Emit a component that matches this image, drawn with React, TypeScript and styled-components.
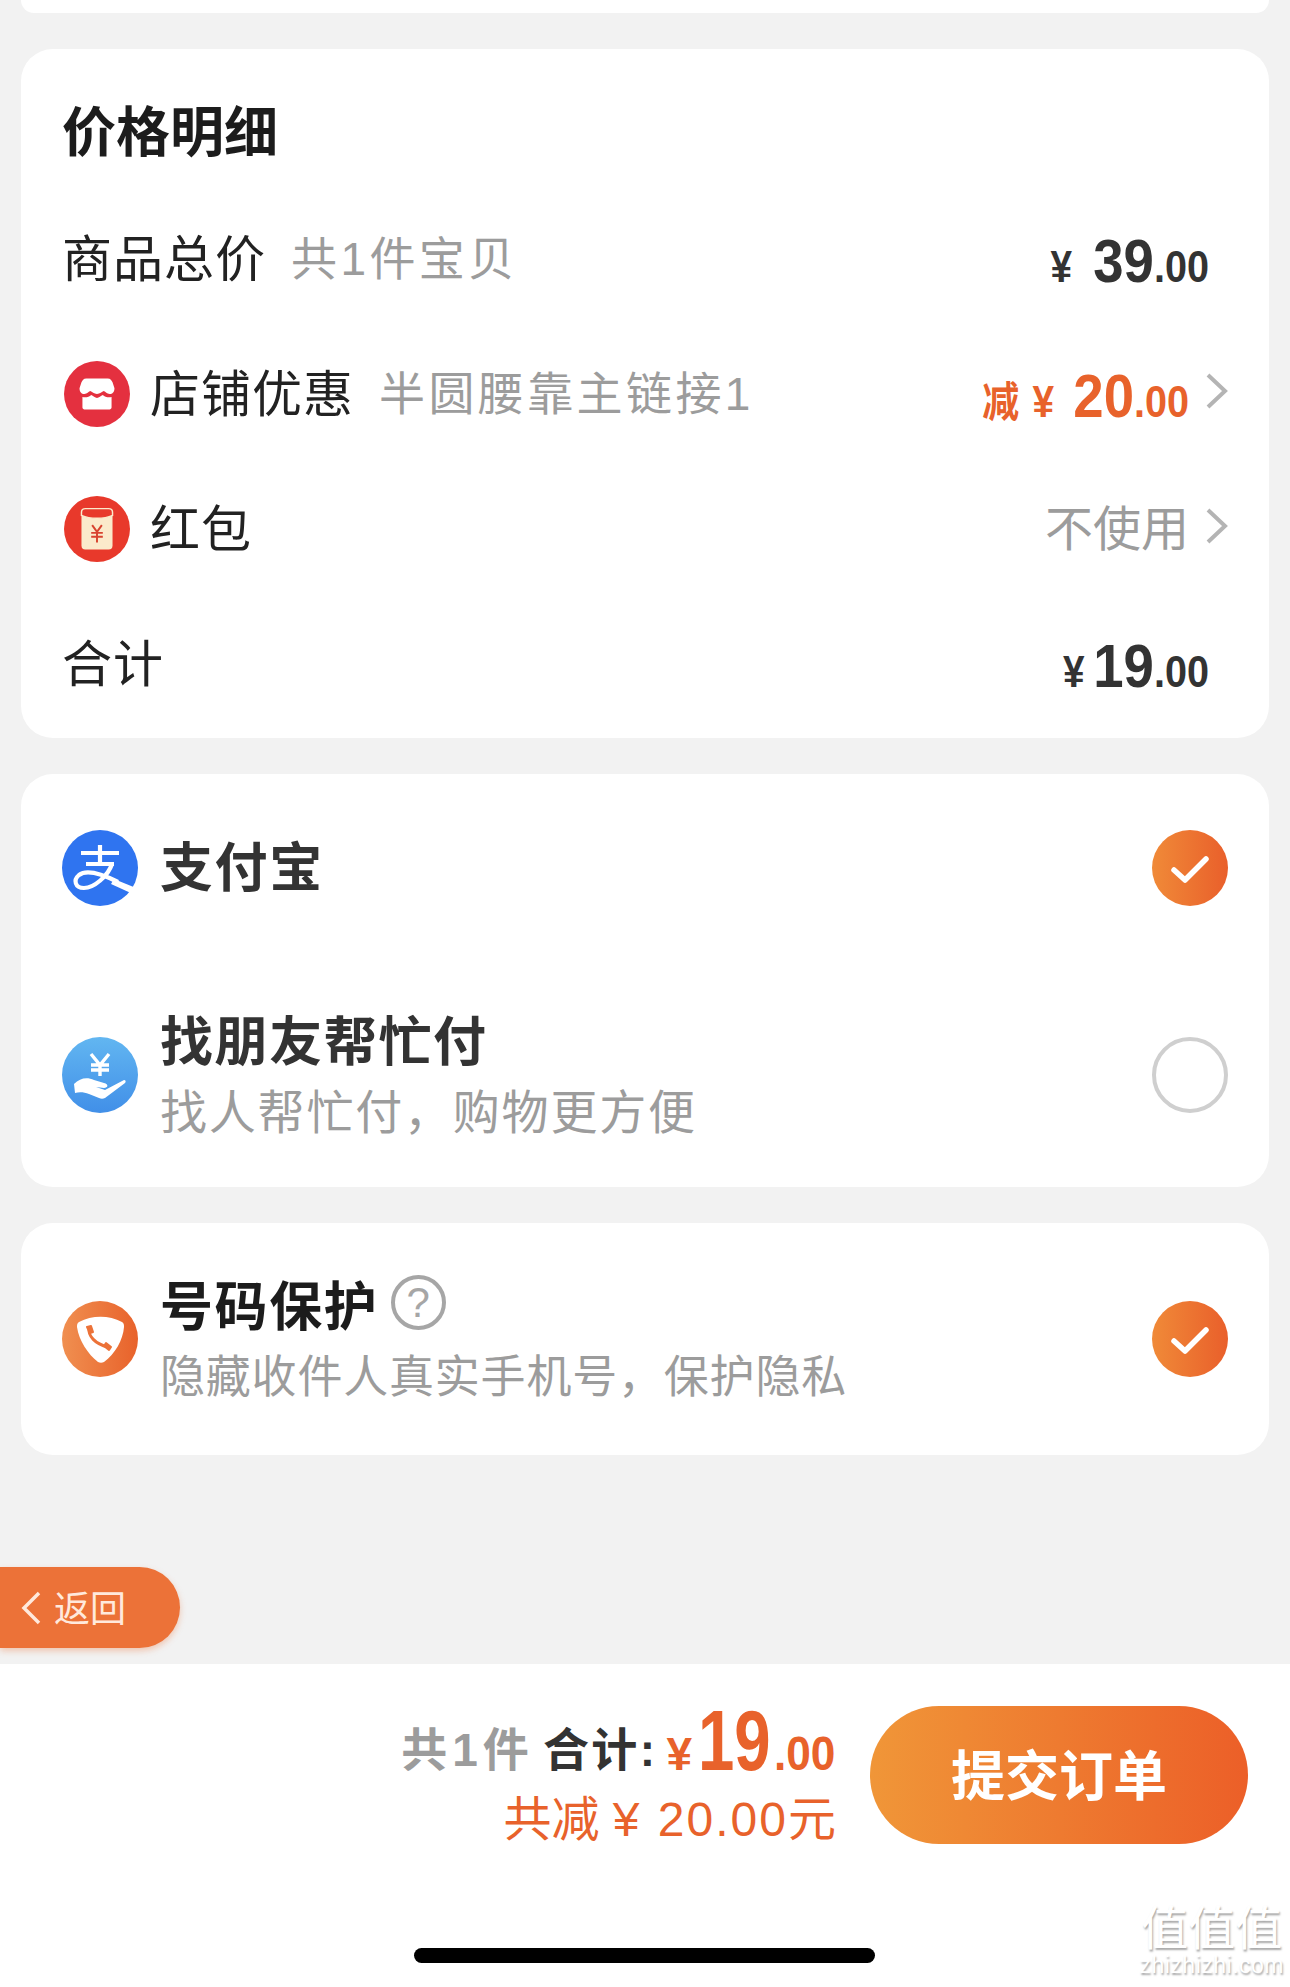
import React from "react";
import styled, { createGlobalStyle } from "styled-components";

const GlobalStyle = createGlobalStyle`
  html, body {
    margin: 0;
    padding: 0;
    background: #f2f2f2;
  }
  * {
    box-sizing: border-box;
  }
`;

const CJK = `"Liberation Sans", "Noto Sans CJK SC", sans-serif`;
const ORANGE = "#e8622b";
const GREY = "#9c9c9c";

const Page = styled.div`
  position: relative;
  width: 1290px;
  height: 1987px;
  overflow: hidden;
  display: flex;
  flex-direction: column;
  background: #f2f2f2;
  font-family: ${CJK};
`;

const Content = styled.main`
  display: flex;
  flex-direction: column;
  gap: 36px;
  padding: 0 21px;
`;

const PrevCard = styled.div`
  height: 13px;
  background: #fff;
  border-radius: 0 0 30px 30px;
`;

const Card = styled.section`
  background: #fff;
  border-radius: 32px;
`;

const PriceCard = styled(Card)`
  height: 689px;
  padding: 50px 41px 8px 41px;
`;

const Title = styled.h2`
  margin: 0 0 24px;
  height: 68px;
  font-size: 54px;
  line-height: 68px;
  font-weight: 700;
  color: #1c1c1c;
`;

const PriceRow = styled.div`
  height: 135px;
  display: flex;
  align-items: center;
`;

const RowIcon = styled.svg`
  width: 66px;
  height: 66px;
  flex: none;
  margin: 0 20px 0 2px;
`;

const Label = styled.span`
  padding-bottom: 8px;
  font-size: 50px;
  letter-spacing: 1px;
  color: #222;
`;

const Hint = styled.span`
  margin-left: 25px;
  padding-bottom: 8px;
  font-size: 46px;
  letter-spacing: 3.4px;
  color: ${GREY};
`;

const RowEnd = styled.div<{ $inset?: number }>`
  margin-left: auto;
  padding-right: ${(p) => p.$inset ?? 0}px;
  display: flex;
  align-items: center;
`;

const Money = styled.span<{ $accent?: boolean }>`
  display: flex;
  align-items: baseline;
  padding-top: 3px;
  font-weight: 700;
  color: ${(p) => (p.$accent ? ORANGE : "#333")};
  transform: scaleX(0.88);
  transform-origin: right center;
`;

const Yen = styled.span<{ $gap?: number }>`
  font-size: 44px;
  margin-right: ${(p) => p.$gap ?? 24}px;
`;

const Minus = styled.span`
  font-size: 42px;
  margin-right: 15px;
`;

const Whole = styled.span`
  font-size: 62px;
`;

const Cents = styled.span`
  font-size: 45px;
`;

const Muted = styled.span`
  padding-bottom: 8px;
  font-size: 48px;
  color: ${GREY};
`;

const Chevron = styled.svg`
  width: 23px;
  height: 38px;
  margin-left: 16px;
  margin-top: -6px;
`;

const PayCard = styled(Card)`
  height: 413px;
  display: flex;
  flex-direction: column;
`;

const OptionRow = styled.div<{ $h: number }>`
  height: ${(p) => p.$h}px;
  padding: 0 41px;
  display: flex;
  align-items: center;
`;

const OptionIcon = styled.svg`
  width: 76px;
  height: 76px;
  flex: none;
  margin-right: 22px;
`;

const OptionText = styled.div`
  display: flex;
  flex-direction: column;
  gap: 5px;
`;

const OptionTitle = styled.div<{ $tone?: string }>`
  display: flex;
  align-items: center;
  height: 64px;
  padding-bottom: 8px;
  font-size: 53px;
  letter-spacing: 1.6px;
  font-weight: 700;
  color: ${(p) => p.$tone ?? "#333"};
`;

const OptionSub = styled.div<{ $tight?: boolean }>`
  height: 60px;
  line-height: 68px;
  font-size: ${(p) => (p.$tight ? 45 : 47)}px;
  letter-spacing: ${(p) => (p.$tight ? 0.8 : 1.8)}px;
  color: ${GREY};
`;

const Help = styled.span`
  width: 55px;
  height: 55px;
  flex: none;
  margin-left: 13px;
  border: 4px solid #a6a6a6;
  border-radius: 50%;
  display: flex;
  align-items: center;
  justify-content: center;
  font-size: 42px;
  font-weight: 400;
  color: #a6a6a6;
`;

const Check = styled.svg`
  width: 76px;
  height: 76px;
  flex: none;
  margin-left: auto;
`;

const Radio = styled.span`
  width: 76px;
  height: 76px;
  flex: none;
  margin-left: auto;
  border: 4px solid #cfcfcf;
  border-radius: 50%;
`;

const PhoneCard = styled(Card)`
  height: 232px;
`;

const BackButton = styled.button`
  margin-top: 112px;
  width: 180px;
  height: 81px;
  padding: 0 0 0 20px;
  display: flex;
  align-items: center;
  gap: 12px;
  border: 0;
  border-radius: 0 41px 41px 0;
  background: #ec7238;
  box-shadow: 0 3px 6px rgba(236, 114, 56, 0.35);
  font-family: ${CJK};
  font-size: 36px;
  color: #ffe9dc;
`;

const BackLabel = styled.span`
  padding-bottom: 4px;
`;

const Footer = styled.footer`
  margin-top: 16px;
  flex: 1;
  padding: 42px 42px 24px 0;
  display: flex;
  flex-direction: column;
  background: #fff;
`;

const FooterBar = styled.div`
  display: flex;
  justify-content: flex-end;
  align-items: flex-start;
  gap: 34px;
`;

const Summary = styled.div`
  margin-top: -7px;
  display: flex;
  flex-direction: column;
  align-items: flex-end;
`;

const TotalLine = styled.div`
  display: flex;
  align-items: baseline;
  height: 82px;
  font-weight: 700;
`;

const Count = styled.span`
  font-size: 46px;
  letter-spacing: 5px;
  color: ${GREY};
  transform: translateY(-4px);
`;

const TotalLabel = styled.span`
  margin-left: 9px;
  font-size: 46px;
  letter-spacing: 2.4px;
  color: #333;
  transform: translateY(-4px);
`;

const TotalYen = styled.span`
  margin-left: 9px;
  margin-right: 6px;
  font-size: 46px;
  color: ${ORANGE};
`;

const TotalWhole = styled.span`
  display: inline-block;
  width: 76px;
  font-size: 86px;
  line-height: 82px;
  color: ${ORANGE};
  transform: scaleX(0.76);
  transform-origin: left center;
`;

const TotalCents = styled.span`
  display: inline-block;
  width: 62px;
  font-size: 48px;
  color: ${ORANGE};
  transform: scaleX(0.92);
  transform-origin: left center;
`;

const Saved = styled.div`
  margin-top: 11px;
  font-size: 48px;
  line-height: 56px;
  color: ${ORANGE};
`;

const SavedAmount = styled.span`
  margin-left: 5px;
  letter-spacing: 2px;
`;

const SubmitButton = styled.button`
  width: 378px;
  height: 138px;
  padding: 0 0 6px;
  border: 0;
  border-radius: 69px;
  background: linear-gradient(90deg, #f09638, #ec5f28);
  font-family: ${CJK};
  font-size: 54px;
  font-weight: 700;
  color: #fff;
`;

const HomeIndicator = styled.div`
  width: 461px;
  height: 15px;
  margin: auto 0 0 414px;
  border-radius: 8px;
  background: #000;
`;

const Watermark = styled.div`
  position: absolute;
  right: 6px;
  bottom: 10px;
  display: flex;
  flex-direction: column;
  align-items: center;
  color: #fff;
  text-shadow: 1px 2px 2px rgba(0, 0, 0, 0.35);
`;

const WatermarkMark = styled.span`
  font-size: 47px;
  line-height: 48px;
`;

const WatermarkUrl = styled.span`
  font-size: 23px;
  line-height: 24px;
  letter-spacing: 0.5px;
`;

const ChevronRight = () => (
  <Chevron viewBox="0 0 23 38" fill="none" stroke="#b4b4b4" strokeWidth="4">
    <path d="M3 3l17 16L3 35" />
  </Chevron>
);

const CheckOn = ({ id }: { id: string }) => (
  <Check viewBox="0 0 76 76">
    <defs>
      <linearGradient id={id} x1="0" x2="1" y1="0" y2="0">
        <stop offset="0" stopColor="#f08a38" />
        <stop offset="1" stopColor="#e95f2b" />
      </linearGradient>
    </defs>
    <circle cx="38" cy="38" r="38" fill={`url(#${id})`} />
    <path d="M22 40l11 10 21-21" fill="none" stroke="#fff" strokeWidth="5.5" strokeLinecap="round" strokeLinejoin="round" />
  </Check>
);

export default function App() {
  return (
    <Page>
      <GlobalStyle />
      <Content>
        <PrevCard />
        <PriceCard>
          <Title>价格明细</Title>
          <PriceRow>
            <Label>商品总价</Label>
            <Hint>共1件宝贝</Hint>
            <RowEnd $inset={19}>
              <Money>
                <Yen>¥</Yen>
                <Whole>39</Whole>
                <Cents>.00</Cents>
              </Money>
            </RowEnd>
          </PriceRow>
          <PriceRow>
            <RowIcon viewBox="0 0 68 68">
              <circle cx="34" cy="34" r="34" fill="#e4303f" />
              <path d="M23 18h22c3 0 4 2 5 4l2 6c0 4-2 6-5 6-3 0-4-2-6-3-2 1-4 3-7 3s-5-2-7-3c-2 1-3 3-6 3-3 0-5-2-5-6l2-6c1-2 2-4 5-4z" fill="#fff" />
              <path d="M19 37c3 1 7 0 9-2 2 1 4 3 6 3s4-2 6-3c2 2 6 3 9 2v11c0 1-1 2-2 2H21c-1 0-2-1-2-2z" fill="#fff" />
            </RowIcon>
            <Label>店铺优惠</Label>
            <Hint>半圆腰靠主链接1</Hint>
            <RowEnd>
              <Money $accent>
                <Minus>减</Minus>
                <Yen $gap={22}>¥</Yen>
                <Whole>20</Whole>
                <Cents>.00</Cents>
              </Money>
              <ChevronRight />
            </RowEnd>
          </PriceRow>
          <PriceRow>
            <RowIcon viewBox="0 0 68 68">
              <circle cx="34" cy="34" r="34" fill="#e8392b" />
              <rect x="18" y="13" width="32" height="42" rx="4" fill="#fbeacb" />
              <path d="M18 17c0-3 2-4 4-4h24c2 0 4 1 4 4v3c-9 4-23 4-32 0z" fill="#e8392b" stroke="#fbeacb" strokeWidth="1.5" />
              <path d="M29 30l5 7 5-7M28 38h12M28 42h12M34 37v11" fill="none" stroke="#d8432f" strokeWidth="2" />
            </RowIcon>
            <Label>红包</Label>
            <RowEnd>
              <Muted>不使用</Muted>
              <ChevronRight />
            </RowEnd>
          </PriceRow>
          <PriceRow>
            <Label>合计</Label>
            <RowEnd $inset={19}>
              <Money>
                <Yen $gap={10}>¥</Yen>
                <Whole>19</Whole>
                <Cents>.00</Cents>
              </Money>
            </RowEnd>
          </PriceRow>
        </PriceCard>

        <PayCard>
          <OptionRow $h={188}>
            <OptionIcon viewBox="0 0 76 76">
              <circle cx="38" cy="38" r="38" fill="#2f74f0" />
              <path
                d="M19 23h38M38 15v19M24 34h28M50 34C46 46 32 58 22 58 13 58 11 50 17 45 26 38 44 46 56 52"
                fill="none"
                stroke="#fff"
                strokeWidth="4.2"
              />
              <path d="M52 49l22 9-3 6-22-10z" fill="#fff" />
            </OptionIcon>
            <OptionTitle>支付宝</OptionTitle>
            <CheckOn id="check-pay" />
          </OptionRow>
          <OptionRow $h={225}>
            <OptionIcon viewBox="0 0 76 76">
              <defs>
                <linearGradient id="friend" x1="0" x2="0" y1="0" y2="1">
                  <stop offset="0" stopColor="#62b6f1" />
                  <stop offset="1" stopColor="#418fe8" />
                </linearGradient>
              </defs>
              <circle cx="38" cy="38" r="38" fill="url(#friend)" />
              <path d="M29 17l9 11 9-11M29 28h18M29 33h18M38 28v11" fill="none" stroke="#fff" strokeWidth="3.4" />
              <path d="M12 47c6-6 13-7 20-4l10 3c5 1 4 5 0 5l-8-1 9 3 19-10c2 0 2 2 1 3L43 61c-2 1-4 1-6 0l-10-4c-5-2-10-2-14-1z" fill="#fff" />
            </OptionIcon>
            <OptionText>
              <OptionTitle>找朋友帮忙付</OptionTitle>
              <OptionSub>找人帮忙付，购物更方便</OptionSub>
            </OptionText>
            <Radio />
          </OptionRow>
        </PayCard>

        <PhoneCard>
          <OptionRow $h={232}>
            <OptionIcon viewBox="0 0 76 76">
              <defs>
                <linearGradient id="phone" x1="0" x2="1" y1="0" y2="0">
                  <stop offset="0" stopColor="#f08f50" />
                  <stop offset="1" stopColor="#e8622b" />
                </linearGradient>
              </defs>
              <circle cx="38" cy="38" r="38" fill="url(#phone)" />
              <path d="M17 21c13-7 30-7 43 0 2 1 2 3 2 5-1 13-9 27-20 35-2 1-4 1-6 0C26 53 17 40 15 26c0-2 0-4 2-5z" fill="#fff" />
              <path d="M27 27c-1 8 6 16 19 19" fill="none" stroke="#ec7238" strokeWidth="3" />
              <path d="M25 26l4-1 2 6-3 1zM42 45l2-3 5 4-2 3z" fill="#ec7238" stroke="#ec7238" strokeWidth="2" strokeLinejoin="round" />
            </OptionIcon>
            <OptionText>
              <OptionTitle $tone="#1c1c1c">
                号码保护
                <Help>?</Help>
              </OptionTitle>
              <OptionSub $tight>隐藏收件人真实手机号，保护隐私</OptionSub>
            </OptionText>
            <CheckOn id="check-phone" />
          </OptionRow>
        </PhoneCard>
      </Content>

      <BackButton>
        <svg width="22" height="34" viewBox="0 0 22 34" fill="none" stroke="#ffe9dc" strokeWidth="3.5">
          <path d="M19 2L4 17l15 15" />
        </svg>
        <BackLabel>返回</BackLabel>
      </BackButton>

      <Footer>
        <FooterBar>
          <Summary>
            <TotalLine>
              <Count>共1件</Count>
              <TotalLabel>合计:</TotalLabel>
              <TotalYen>¥</TotalYen>
              <TotalWhole>19</TotalWhole>
              <TotalCents>.00</TotalCents>
            </TotalLine>
            <Saved>
              共减 ¥ <SavedAmount>20.00</SavedAmount>元
            </Saved>
          </Summary>
          <SubmitButton>提交订单</SubmitButton>
        </FooterBar>
        <HomeIndicator />
      </Footer>

      <Watermark>
        <WatermarkMark>值值值</WatermarkMark>
        <WatermarkUrl>zhizhizhi.com</WatermarkUrl>
      </Watermark>
    </Page>
  );
}
